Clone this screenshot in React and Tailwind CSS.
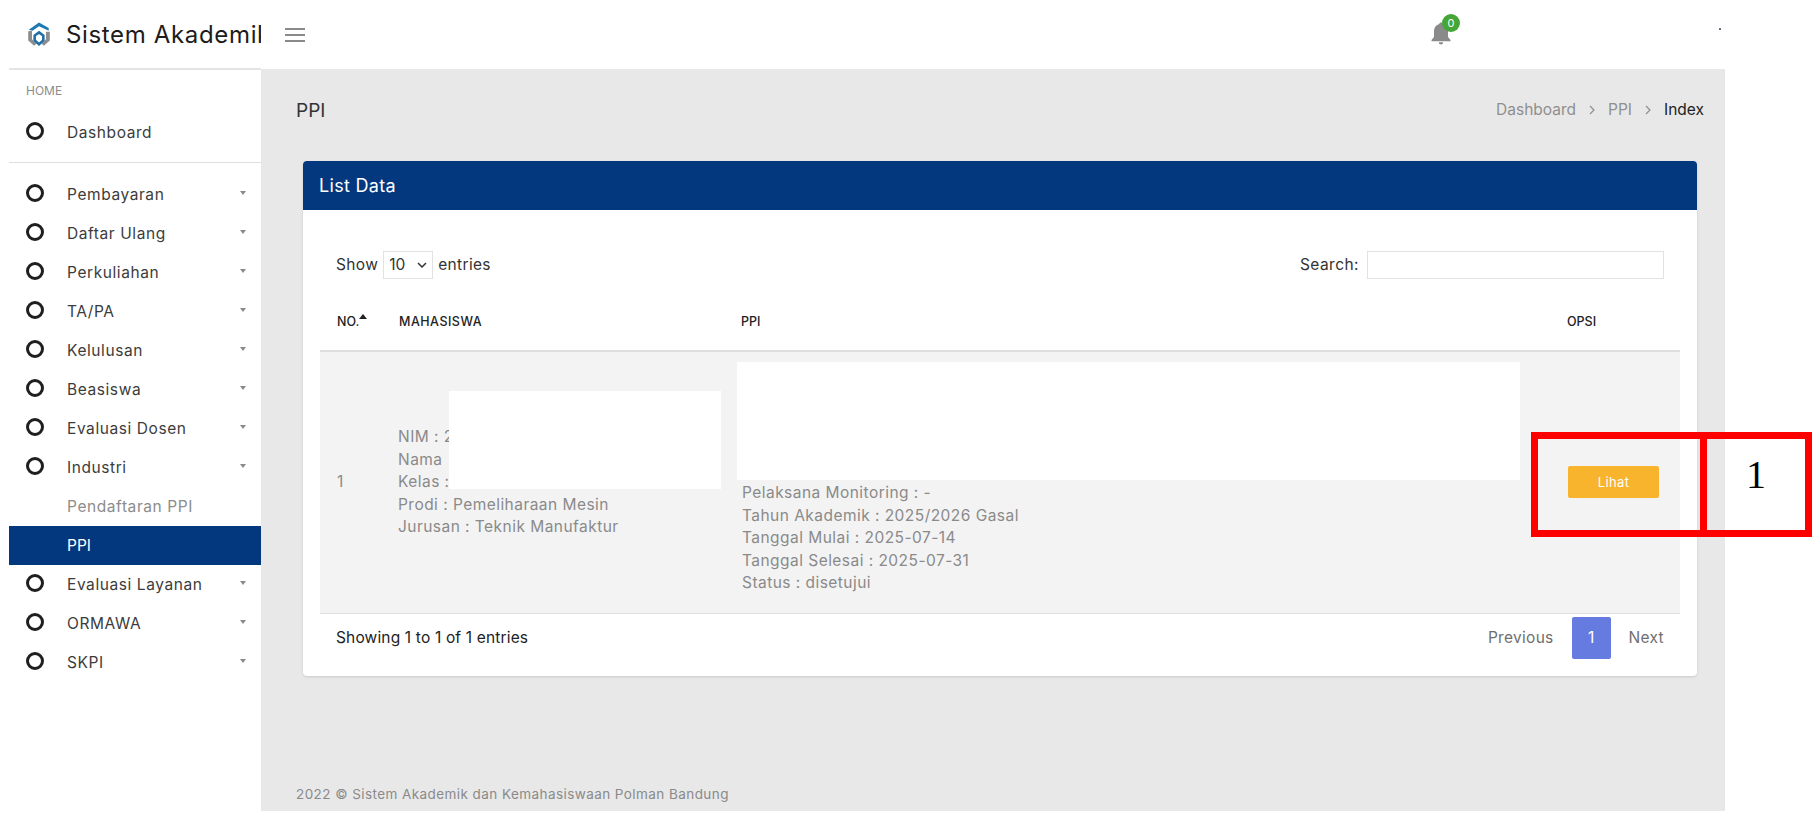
import React from "react";

const font = "font-['Inter','Liberation_Sans',sans-serif]";

const menu = [
  "Pembayaran",
  "Daftar Ulang",
  "Perkuliahan",
  "TA/PA",
  "Kelulusan",
  "Beasiswa",
  "Evaluasi Dosen",
  "Industri",
];
const menuBottom = ["Evaluasi Layanan", "ORMAWA", "SKPI"];

const Logo = () => (
  <svg className="shrink-0 -ml-[1px]" width="24" height="27" viewBox="0 0 22 25" fill="none">
    <path d="M1.500 8 L11 1.500 L20 6.500 L20 9 L11 4.800 L5 9 Z" fill="#1f78b4" />
    <path d="M1 9.500 L4.500 9 L4.500 17 L8.500 21 L6.500 23 L1 18 Z" fill="#8d8d8d" />
    <path d="M17.500 10 L21 10 L21 18 L15.500 23 L13.500 21 L17.500 17 Z" fill="#8d8d8d" />
    <path d="M11 10.500 L15 13.500 L15 18 L11 21.500 L7 18 L7 13.500 Z" stroke="#1f6ea8" strokeWidth="2.400" />
  </svg>
);

const Circle = () => (
  <span className="w-[18px] h-[18px] rounded-full border-[3px] border-[#1f1f1f] shrink-0 -mt-[4px]" />
);

const Caret = () => (
  <span className="ml-auto -mt-[4px] w-0 h-0 border-x-[3.5px] border-x-transparent border-t-[4px] border-t-[#8a8a8a]" />
);

const MenuItem = ({ label, caret = true }) => (
  <div className="flex items-center h-[39px] pl-[17px] pr-[15px] text-[15.5px] text-[#3c3c3c]">
    <Circle />
    <span className="ml-[23px] tracking-[0.58px]">{label}</span>
    {caret && <Caret />}
  </div>
);

const Sidebar = () => (
  <aside className="ml-[9px] w-[252px] shrink-0 border-t-2 border-[#e4e4e4] -mt-[1px]">
    <div className="h-[43px] pl-[17px] pt-[13px] text-[12px] leading-[16px] text-[#8c8c8c]">HOME</div>
    <MenuItem label="Dashboard" caret={false} />
    <div className="mt-[10px] mb-[12px] border-t border-[#dedede]" />
    {menu.map((m) => (
      <MenuItem key={m} label={m} />
    ))}
    <div className="flex items-center h-[39px] pl-[58px] text-[15.5px] text-[#8c8c8c] tracking-[0.58px]">
      Pendaftaran PPI
    </div>
    <div className="flex items-center h-[39px] pl-[58px] text-[15.5px] text-white bg-[#03387f]">PPI</div>
    {menuBottom.map((m) => (
      <MenuItem key={m} label={m} />
    ))}
  </aside>
);

const Header = () => (
  <header className="relative flex items-center h-[69px] shrink-0">
    <div className="flex items-center w-[261px] shrink-0 overflow-hidden whitespace-nowrap pl-[28px]">
      <Logo />
      <span className="ml-[15px] text-[24px] text-[#1c1c1c] tracking-[0.65px]">Sistem Akademik</span>
    </div>
    <div className="ml-[24px] flex flex-col gap-[4px]">
      <span className="block w-[20px] h-[2px] bg-[#8a8a8a]" />
      <span className="block w-[20px] h-[2px] bg-[#8a8a8a]" />
      <span className="block w-[20px] h-[2px] bg-[#8a8a8a]" />
    </div>
    <div className="ml-auto mr-[273px] relative -mt-[3px]">
      <svg width="22" height="24" viewBox="0 0 22 24" fill="#8a8a8a">
        <path d="M11 1.500c-1 0-1.700.7-1.700 1.600C6 4 4 6.800 4 10v6l-2.500 3v1.300h19V19L18 16v-6c0-3.200-2-6-5.300-6.900 0-.9-.7-1.600-1.700-1.600z" />
        <path d="M8.800 21.300a2.200 2.200 0 0 0 4.400 0z" />
      </svg>
      <span className="absolute -top-[7px] left-[12px] w-[18px] h-[18px] rounded-full bg-[#43a637] text-white text-[11px] leading-[18px] text-center">
        0
      </span>
    </div>
    <span className="absolute left-[1719px] top-[28px] w-[2px] h-[2px] bg-[#666a80]" />
  </header>
);

const Table = () => (
  <table className="w-full table-fixed border-collapse text-[15.5px] leading-[22.5px] text-[#8a8a8a]">
    <thead>
      <tr className="h-[59px] border-b-2 border-[#dedede] text-[12.5px] font-medium text-[#222] text-left">
        <th className="w-[61px] pl-[17px] pt-[3px] font-medium">
          <span className="inline-flex items-start">
            NO.
            <span className="mt-[3px] w-0 h-0 border-x-[4.5px] border-x-transparent border-b-[5px] border-b-[#222]" />
          </span>
        </th>
        <th className="w-[343px] pl-[18px] pt-[3px] font-medium tracking-[0.5px]">MAHASISWA</th>
        <th className="w-[825px] pl-[17px] pt-[3px] font-medium">PPI</th>
        <th className="pl-[18px] pt-[3px] font-medium">OPSI</th>
      </tr>
    </thead>
    <tbody>
      <tr className="bg-[#f3f3f3] border-b border-[#dedede]">
        <td className="pl-[17px]">1</td>
        <td className="relative pl-[17px] tracking-[0.46px]">
          <div>NIM : 2</div>
          <div>Nama</div>
          <div>Kelas :</div>
          <div>Prodi : Pemeliharaan Mesin</div>
          <div>Jurusan : Teknik Manufaktur</div>
          <div className="absolute left-[68px] top-[39px] w-[272px] h-[98px] bg-white" />
        </td>
        <td className="pt-[10px] pb-[18px] tracking-[0.46px]">
          <div className="ml-[13px] w-[783px] h-[118px] bg-white" />
          <div className="pl-[18px] pt-[2px]">
            <div>Pelaksana Monitoring : -</div>
            <div>Tahun Akademik : 2025/2026 Gasal</div>
            <div>Tanggal Mulai : 2025-07-14</div>
            <div>Tanggal Selesai : 2025-07-31</div>
            <div>Status : disetujui</div>
          </div>
        </td>
        <td className="pl-[19px]">
          <button className="w-[91px] h-[32px] rounded-[2px] bg-[#f8b42c] text-white text-[13px] tracking-[0.4px]">
            Lihat
          </button>
        </td>
      </tr>
    </tbody>
  </table>
);

const Card = () => (
  <section className="ml-[42px] mt-[16px] h-[515px] w-[1394px] rounded-[4px] bg-white shadow-sm overflow-hidden">
    <div className="h-[49px] flex items-center pl-[16px] bg-[#03387f] text-white text-[18px] tracking-[0.3px]">
      List Data
    </div>
    <div className="px-[17px]">
      <div className="flex items-center h-[28px] mt-[41px] text-[15.5px] text-[#333] px-[16px]">
        <span className="tracking-[0.35px]">Show</span>
        <span className="ml-[5px] w-[50px] h-[28px] border border-[#e2e2e2] flex items-center pl-[5px]">
          10
          <svg className="ml-auto mr-[5px]" width="10" height="6" viewBox="0 0 10 6" fill="none" stroke="#333" strokeWidth="1.500">
            <path d="M1 1l4 4 4-4" />
          </svg>
        </span>
        <span className="ml-[5px] tracking-[0.33px]">entries</span>
        <span className="ml-auto tracking-[0.45px]">Search:</span>
        <span className="ml-[8px] w-[297px] h-[28px] border border-[#e2e2e2]" />
      </div>
      <div className="mt-[13px]">
        <Table />
      </div>
      <div className="flex items-center h-[42px] mt-[3px] text-[15.5px] px-[16px]">
        <span className="text-[#222] tracking-[0.16px]">Showing 1 to 1 of 1 entries</span>
        <div className="ml-auto flex items-center text-[#6f6f6f]">
          <span className="tracking-[0.3px]">Previous</span>
          <span className="ml-[18px] w-[39px] h-[42px] rounded-[2px] bg-[#667bdf] text-white flex items-center justify-center">
            1
          </span>
          <span className="ml-[18px] tracking-[0.3px]">Next</span>
        </div>
      </div>
    </div>
  </section>
);

const Main = () => (
  <main className="flex-1 min-w-0 flex flex-col bg-[#e8e8e8]">
    <div className="flex items-center h-[70px] mt-[6px] pl-[35px] pr-[21px]">
      <h1 className="text-[19px] mt-[2px] text-[#333]">PPI</h1>
      <div className="ml-auto flex items-center text-[15.5px] text-[#8f8f8f]">
        <span>Dashboard</span>
        <svg className="mx-[12px]" width="8" height="10" viewBox="0 0 8 10" fill="none" stroke="#8f8f8f" strokeWidth="1.200">
          <path d="M2 1l4 4-4 4" />
        </svg>
        <span>PPI</span>
        <svg className="mx-[12px]" width="8" height="10" viewBox="0 0 8 10" fill="none" stroke="#8f8f8f" strokeWidth="1.200">
          <path d="M2 1l4 4-4 4" />
        </svg>
        <span className="text-[#222]">Index</span>
      </div>
    </div>
    <Card />
    <footer className="mt-auto pl-[35px] pb-[7px] text-[13.5px] leading-[20px] text-[#8a8a8a] tracking-[0.43px]">
      2022 © Sistem Akademik dan Kemahasiswaan Polman Bandung
    </footer>
  </main>
);

export default function App() {
  return (
    <div className={`relative w-[1819px] h-[822px] overflow-hidden bg-white ${font}`}>
      <div className="w-[1725px] h-[811px] flex flex-col">
        <Header />
        <div className="flex flex-1 min-h-0">
          <Sidebar />
          <Main />
        </div>
      </div>
      {/* annotation boxes drawn over the screenshot */}
      <div className="absolute left-[1531px] top-[432px] w-[176px] h-[105px] border-[7px] border-[#ff0000]" />
      <div className="absolute left-[1700px] top-[432px] w-[112px] h-[105px] border-[7px] border-[#ff0000] flex items-center justify-center pb-[20px] text-[40px] leading-[46px] text-black font-['Liberation_Serif',serif]">
        1
      </div>
    </div>
  );
}
